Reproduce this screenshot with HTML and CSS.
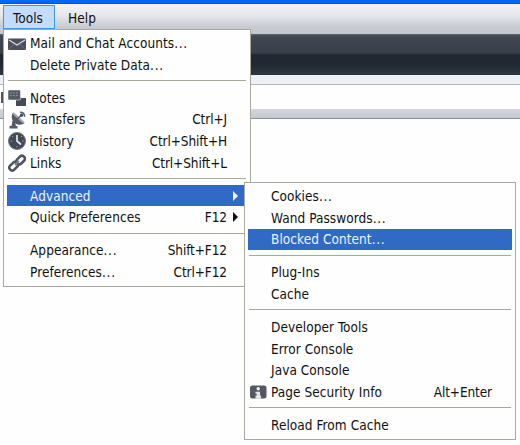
FILE: index.html
```
<!DOCTYPE html>
<html lang="en">
<head>
  <meta charset="UTF-8">
  <title>Tools menu</title>
  <link rel="stylesheet" href="styles.css">
</head>
<body>

  <!-- Browser window -->
  <div class="titlebar"></div>
  <div class="menubar">
    <div class="menu-title active"><span class="label">Tools</span></div>
    <div class="menu-title"><span class="label">Help</span></div>
  </div>
  <div class="tabbar"></div>
  <div class="toolbar"></div>
  <div class="address"><div class="cursor"></div></div>
  <div class="panel-edge"></div>

  <!-- Tools menu -->
  <div class="menu tools-menu">
    <div class="item">
      <svg class="icon" viewBox="0 0 18 18">
        <rect x="0" y="3.5" width="18" height="11.5" rx="1" fill="#4b505a"/>
        <path d="M1 5L9 10L17 5" fill="none" stroke="#d9dbe0" stroke-width="1.3"/>
        <path d="M1 14L6 9.5M17 14L12 9.5" stroke="#777c86" stroke-width=".7"/>
      </svg>
      <span class="label">Mail and Chat Accounts<span class="dots">...</span></span>
    </div>
    <div class="item"><span class="label">Delete Private Data<span class="dots">...</span></span></div>
    <div class="separator"></div>
    <div class="item">
      <svg class="icon" viewBox="0 0 18 18">
        <path d="M8 8h4l1 1h5v8H8z" fill="#464c57"/>
        <rect x="0" y="1" width="12.5" height="10" rx="1" fill="#555b66" stroke="#fefefe" stroke-width=".5"/>
        <path d="M2 4h9M2 6.5h8" stroke="#858b96" stroke-width="1" stroke-dasharray="2 1"/>
      </svg>
      <span class="label">Notes</span>
    </div>
    <div class="item">
      <svg class="icon" viewBox="0 0 18 18">
        <path d="M5 1.5C2 6 4.5 12.5 10 13.5C13 14 15 13.5 16.5 12z" fill="#555b66"/>
        <path d="M5 2L16 12" stroke="#a2a7b0" stroke-width="2"/>
        <path d="M9 8L14 4M12 1.2c2.7 0 4.6 1.8 4.6 4.5" fill="none" stroke="#555b66" stroke-width="1.6"/>
        <circle cx="13.5" cy="4.2" r="1.6" fill="#464c57"/>
        <path d="M4.5 9.5L3.5 15H1.5v2.5h8V15H8L7 11z" fill="#555b66"/>
      </svg>
      <span class="label">Transfers</span><span class="shortcut">Ctrl+J</span>
    </div>
    <div class="item">
      <svg class="icon" viewBox="0 0 18 18">
        <circle cx="9" cy="9" r="8.5" fill="#424955" stroke="#737983"/>
        <path d="M9 3v6l4 3.5" fill="none" stroke="#e5e8ed" stroke-width="1.7"/>
        <path d="M2.5 9h1.5M14 9h1.5M9 14v1.5M4 4l1 1M14 4l-1 1" stroke="#969ca6"/>
      </svg>
      <span class="label">History</span><span class="shortcut">Ctrl+Shift+H</span>
    </div>
    <div class="item">
      <svg class="icon" viewBox="0 0 18 18">
        <g fill="none" stroke="#50555f" stroke-width="2.6">
          <rect x="7.8" y="3.2" width="9.5" height="5.8" rx="2.8" transform="rotate(-45 12.5 6)"/>
          <rect x=".8" y="9.4" width="9.5" height="5.8" rx="2.8" transform="rotate(-45 5.5 12.2)"/>
        </g>
        <path d="M7 11L11 7" stroke="#7d828c" stroke-width="1.8"/>
      </svg>
      <span class="label">Links</span><span class="shortcut">Ctrl+Shift+L</span>
    </div>
    <div class="separator"></div>
    <div class="item selected"><span class="label">Advanced</span><span class="arrow"></span></div>
    <div class="item"><span class="label">Quick Preferences</span><span class="shortcut">F12</span><span class="arrow"></span></div>
    <div class="separator"></div>
    <div class="item"><span class="label">Appearance<span class="dots">...</span></span><span class="shortcut">Shift+F12</span></div>
    <div class="item"><span class="label">Preferences<span class="dots">...</span></span><span class="shortcut">Ctrl+F12</span></div>
  </div>

  <!-- Advanced submenu -->
  <div class="menu advanced-menu">
    <div class="item"><span class="label">Cookies<span class="dots">...</span></span></div>
    <div class="item"><span class="label">Wand Passwords<span class="dots">...</span></span></div>
    <div class="item selected"><span class="label">Blocked Content<span class="dots">...</span></span></div>
    <div class="separator"></div>
    <div class="item"><span class="label">Plug-Ins</span></div>
    <div class="item"><span class="label">Cache</span></div>
    <div class="separator"></div>
    <div class="item"><span class="label">Developer Tools</span></div>
    <div class="item"><span class="label">Error Console</span></div>
    <div class="item"><span class="label">Java Console</span></div>
    <div class="item">
      <svg class="icon" viewBox="0 0 18 18">
        <rect x="1" y="2.5" width="16.5" height="13" rx="2.5" fill="#525762"/>
        <circle cx="9.2" cy="5.7" r="1.7" fill="#f1f1f4"/>
        <path d="M6.5 8.7h4.5v3.8h1v3.2H6.5v-3.2h1.3v-1.8H6.5z" fill="#e4e5e9"/>
      </svg>
      <span class="label">Page Security Info</span><span class="shortcut">Alt+Enter</span>
    </div>
    <div class="separator"></div>
    <div class="item"><span class="label">Reload From Cache</span></div>
  </div>

</body>
</html>
```
FILE: styles.css
```
body {
  margin: 0;
  height: 445px;
  overflow: hidden;
  background-color: #fefefe;
  color: #111;
  font-family: 'DejaVu Sans Condensed', 'DejaVu Sans', sans-serif;
  font-stretch: condensed;
  font-size: 13.5px;
  letter-spacing: 0;
}

.titlebar {
  height: 4px;
  background: linear-gradient(#0068f8 60%, #0847c8);
}

.menubar {
  display: flex;
  box-sizing: border-box;
  height: 30px;
  padding: 1px 0 0 3px;
  background: linear-gradient(#f4f4f5, #e6e7eb 40%, #c8cbd2 75%, #c4c9ce);
}

.menu-title {
  box-sizing: border-box;
  height: 24px;
  padding: 0 10px;
  border: 1px solid transparent;
  line-height: 24px;
}

.menu-title.active {
  width: 52px;
  padding: 0 9px;
  margin-right: 2px;
  border-color: #3e98e4;
  background-color: #c4dcfb;
}

.tabbar {
  height: 41px;
  background: linear-gradient(#626b70 0, #424853 2px, #383f4b 19px, #202731 21px, #202832 30px, #2d373f 100%);
}

.toolbar {
  height: 9px;
  background-color: #eceff3;
  border-bottom: 1px solid #b3b8bd;
}

.address {
  height: 24px;
}

.cursor {
  width: 2px;
  height: 11px;
  margin-left: 1px;
  position: relative;
  top: 7px;
  background-color: #555;
}

.panel-edge {
  height: 9px;
  background: linear-gradient(#d4d7df, #c4c8d1);
  border-bottom: 1px solid #89918f;
}

.menu {
  position: absolute;
  box-sizing: border-box;
  background-color: #fefefe;
  border: 1px solid #aaa99e;
}

.tools-menu {
  top: 29px;
  left: 3px;
  width: 248px;
  height: 258px;
  padding: 2.5px 3px;
}

.advanced-menu {
  top: 182px;
  left: 244px;
  width: 272px;
  height: 258px;
  padding: 2.5px 3px;
}

.item {
  display: flex;
  align-items: center;
  position: relative;
  height: 21.6px;
  padding: 0 20px 0 23px;
  white-space: nowrap;
}

.item.selected {
  background-color: #316ac5;
  color: #eaf3ff;
}

.icon {
  position: absolute;
  left: 1px;
  top: 2px;
  width: 18px;
  height: 18px;
}

.label {
  letter-spacing: 0.06px;
}

.dots {
  letter-spacing: 0.7px;
}

.shortcut {
  margin-left: auto;
  letter-spacing: -0.1px;
}

.arrow {
  position: absolute;
  right: 9px;
  top: 6px;
  border: 5px solid transparent;
  border-left-color: currentColor;
  border-right-width: 0;
}

.separator {
  box-sizing: border-box;
  height: 11.4px;
  margin: 0 1px;
  padding-top: 4.5px;
}

.separator::after {
  content: "";
  display: block;
  height: 1px;
  background-color: #aaa79d;
}
```
